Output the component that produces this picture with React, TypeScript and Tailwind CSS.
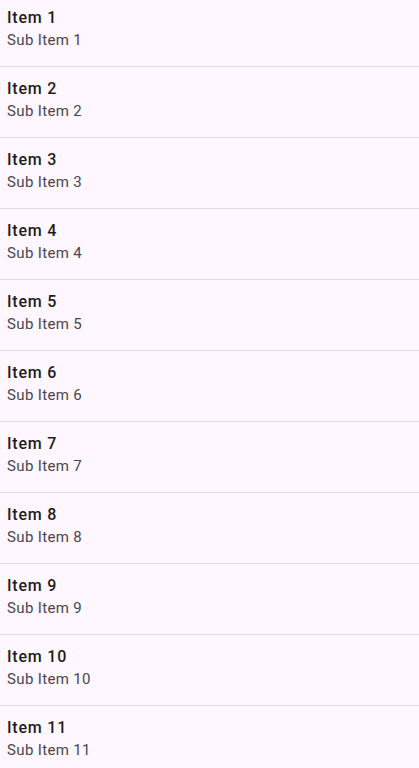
import React from "react";

const items = Array.from({ length: 11 }, (_, i) => i + 1);

export default function App() {
  return (
    <div
      className="h-[768px] w-full overflow-hidden bg-[#fef7ff]"
      style={{ fontFamily: "Roboto, 'Noto Sans', sans-serif" }}
    >
      <div className="-mt-1 flex flex-col">
        {items.map((n) => (
          <div key={n} className="flex flex-col">
            <div className="flex h-[70px] flex-col px-[7px] pt-[10px]">
              <div className="text-[16px] leading-[24px] font-medium tracking-[0.8px] text-[#1d1b20]">Item {n}</div>
              <div className="text-[15px] leading-[20px] tracking-[0.35px] text-[#49454f]">Sub Item {n}</div>
            </div>
            <div className="h-px w-full bg-[#e2dde5]" />
          </div>
        ))}
      </div>
    </div>
  );
}
